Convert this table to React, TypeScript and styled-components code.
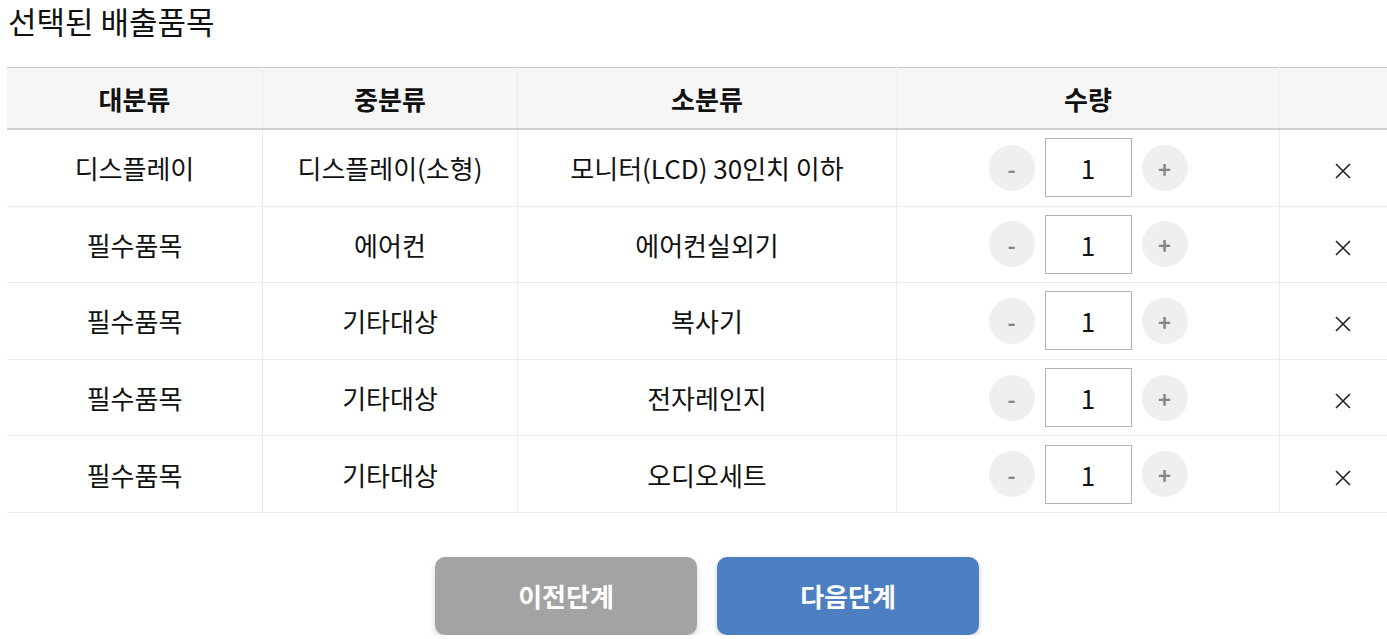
import styled, { createGlobalStyle } from 'styled-components'

const GlobalStyle = createGlobalStyle`
    html, body {
        margin: 0;
        padding: 0;
        background: #fff;
        overflow: hidden;
    }
    body {
        font-family: 'Noto Sans CJK KR', 'Noto Sans', sans-serif;
        color: #111;
    }
`

const Page = styled.div`
    width: 1400px;
    padding: 2px 0 0 7px;
`
const Title = styled.h2`
    margin: 0;
    padding: 0 0 0 1px;
    font-size: 31px;
    font-weight: 400;
    line-height: 38px;
    height: 65px;
`
const Table = styled.table`
    width: 1400px;
    border-collapse: collapse;
    table-layout: fixed;
    font-size: 26px;
    text-align: center;
`
const HeadRow = styled.tr`
    background: #f6f6f6;
    border-top: 1px solid #c9c9c9;
    border-bottom: 2px solid #d0d0d0;
`
const Th = styled.th<{ $w: number }>`
    width: ${(p) => p.$w}px;
    height: 60px;
    padding: 0;
    font-weight: 700;
    border-left: 1px solid #ececec;
    &:first-child {
        border-left: none;
    }
`
const Row = styled.tr`
    border-bottom: 1px solid #ececec;
`
const Td = styled.td`
    height: 75.6px;
    padding: 0;
    border-left: 1px solid #ececec;
    &:first-child {
        border-left: none;
    }
`
const Stepper = styled.div`
    display: flex;
    align-items: center;
    justify-content: center;
    gap: 10px;
`
const RoundButton = styled.button`
    width: 46px;
    height: 46px;
    border: none;
    border-radius: 50%;
    background: #efefef;
    color: #858585;
    font-family: 'Noto Sans CJK KR', sans-serif;
    font-size: 22px;
    font-weight: 700;
    padding: 0;
    line-height: 46px;
`
const Qty = styled.div`
    width: 85px;
    height: 57px;
    border: 1px solid #b3b3b3;
    display: flex;
    align-items: center;
    justify-content: center;
    font-size: 26px;
`
const Remove = styled.button`
    border: none;
    background: none;
    padding: 0;
    margin: 6px 6px 0 0;
    cursor: pointer;
`
const Actions = styled.div`
    display: flex;
    justify-content: center;
    gap: 20px;
    margin-top: 44px;
`
const StepButton = styled.button<{ $primary?: boolean }>`
    width: 262px;
    height: 78px;
    border: none;
    border-radius: 10px;
    background: ${(p) => (p.$primary ? '#4b7fc2' : '#a3a3a3')};
    color: #fff;
    font-family: 'Noto Sans CJK KR', sans-serif;
    font-size: 26px;
    font-weight: 700;
    box-shadow: 0 3px 6px rgba(0, 0, 0, 0.18);
`

const items = [
    ['디스플레이', '디스플레이(소형)', '모니터(LCD) 30인치 이하'],
    ['필수품목', '에어컨', '에어컨실외기'],
    ['필수품목', '기타대상', '복사기'],
    ['필수품목', '기타대상', '전자레인지'],
    ['필수품목', '기타대상', '오디오세트'],
]

export default function App() {
    return (
        <Page>
            <GlobalStyle />
            <Title>선택된 배출품목</Title>
            <Table>
                <thead>
                    <HeadRow>
                        <Th $w={255}>대분류</Th>
                        <Th $w={254}>중분류</Th>
                        <Th $w={378}>소분류</Th>
                        <Th $w={382}>수량</Th>
                        <Th $w={131}></Th>
                    </HeadRow>
                </thead>
                <tbody>
                    {items.map((item, i) => (
                        <Row key={i}>
                            <Td>{item[0]}</Td>
                            <Td>{item[1]}</Td>
                            <Td>{item[2]}</Td>
                            <Td>
                                <Stepper>
                                    <RoundButton>-</RoundButton>
                                    <Qty>1</Qty>
                                    <RoundButton>+</RoundButton>
                                </Stepper>
                            </Td>
                            <Td>
                                <Remove aria-label="삭제">
                                    <svg width="16" height="16" viewBox="0 0 16 16">
                                        <path d="M1 1L15 15M15 1L1 15" stroke="#222" strokeWidth="1.6" />
                                    </svg>
                                </Remove>
                            </Td>
                        </Row>
                    ))}
                </tbody>
            </Table>
            <Actions>
                <StepButton>이전단계</StepButton>
                <StepButton $primary>다음단계</StepButton>
            </Actions>
        </Page>
    )
}
